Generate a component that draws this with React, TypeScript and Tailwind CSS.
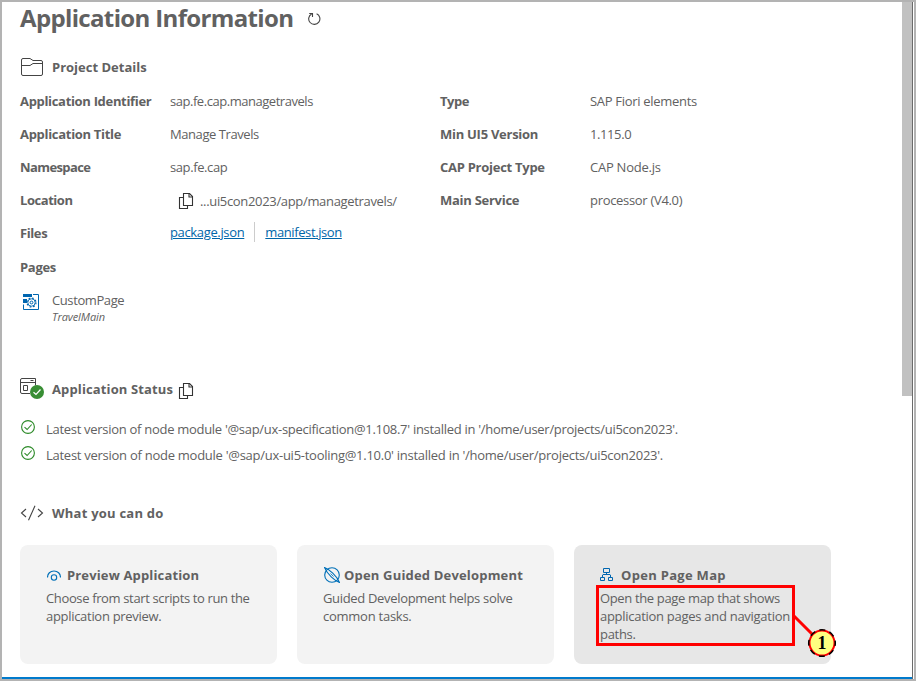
import type { ReactNode } from "react";

function CopyIcon() {
  return (
    <svg className="h-4 w-4 shrink-0" viewBox="0 0 16 16" fill="none" stroke="#333" strokeWidth="1.1">
      <path d="M5.500 .5h6l3 3v9h-9z" />
      <path d="M11 .5v3.500h3.500" />
      <path d="M5.500 4.500h-4v11h8v-3" />
    </svg>
  );
}

function CheckCircle() {
  return (
    <svg className="mr-[11px] h-[14px] w-[14px] shrink-0 -translate-y-[2px]" viewBox="0 0 14 14" fill="none" stroke="#2c8a28" strokeWidth="1.1">
      <circle cx="7" cy="7" r="6.4" />
      <path d="M3.500 7.200l2.600 2.300 4.600-5" />
    </svg>
  );
}

function Field({ label, children, track }: { label: string; children: ReactNode; track: string }) {
  return (
    <div className="flex h-[33px] items-center">
      <div className={`w-[150px] shrink-0 font-bold ${track}`}>{label}</div>
      {children}
    </div>
  );
}

function Card({ icon, title, track, children, active = false }: { icon: ReactNode; title: string; track: string; children: ReactNode; active?: boolean }) {
  return (
    <div className={`h-[119px] w-[257px] rounded-lg px-[26px] pt-[19px] ${active ? "bg-[#e7e7e7]" : "bg-[#f3f3f3]"}`}>
      <div className="flex h-[22px] items-center font-bold">
        {icon}
        <span className={`whitespace-nowrap ${track}`}>{title}</span>
      </div>
      <div className="mt-[3px] whitespace-nowrap leading-[18px]">{children}</div>
    </div>
  );
}

export default function App() {
  return (
    <div className="relative h-[681px] w-[916px] overflow-hidden border-2 border-[#b3b3b3] bg-white pl-[18px] font-['Open_Sans',sans-serif] text-[13px] leading-[18px] text-[#616161]">
      <div className="flex h-[34px] items-center text-2xl font-bold">
        <span className="-mt-[2px] tracking-[-0.65px]">Application Information</span>
        <svg className="ml-[15px] h-[14px] w-[13px]" viewBox="0 0 13 14" fill="none" stroke="#444" strokeWidth="1.1">
          <path d="M8.600 1.700a5.600 5.600 0 1 1-5 .2" />
          <path d="M1.200 1.500h3.300v3.500" />
        </svg>
      </div>
      <div className="mt-[14px] flex h-[34px] items-center font-bold">
        <svg className="mr-[8px] ml-px h-[18px] w-[23px]" viewBox="0 0 23 18" fill="none" stroke="#444">
          <path d="M.5 2Q.5 .5 2 .5h7l3 2h8q1.500 0 1.500 1.500v12q0 1.500-1.500 1.500H2Q.5 17.500 .5 16z" />
          <path d="M.5 7.500H9l3-2h9.500" />
        </svg>
        <span>Project Details</span>
      </div>
      <div className="flex">
        <div className="w-[420px]">
          <Field label="Application Identifier" track="tracking-[-0.32px]"><span className="tracking-[-0.46px]">sap.fe.cap.managetravels</span></Field>
          <Field label="Application Title" track="tracking-[-0.3px]"><span className="tracking-[-0.43px]">Manage Travels</span></Field>
          <Field label="Namespace" track="tracking-[-0.6px]"><span className="tracking-[-0.4px]">sap.fe.cap</span></Field>
          <Field label="Location" track="tracking-[-0.45px]">
            <span className="ml-2 mr-[6px] mt-[2px]"><CopyIcon /></span>
            <span className="mt-[2px] tracking-[-0.33px]">...ui5con2023/app/managetravels/</span>
          </Field>
          <Field label="Files" track="tracking-[-0.4px]">
            <span className="-mt-[2px] tracking-[-0.35px] text-[#0066a9] underline">package.json</span>
            <span className="-mt-[2px] ml-[10px] mr-[10px] h-5 w-px bg-[#ccc]" />
            <span className="-mt-[2px] tracking-[-0.4px] text-[#0066a9] underline">manifest.json</span>
          </Field>
        </div>
        <div>
          <Field label="Type" track="tracking-[-0.45px]"><span className="tracking-[-0.3px]">SAP Fiori elements</span></Field>
          <Field label="Min UI5 Version" track="tracking-[-0.27px]"><span className="tracking-[-0.4px]">1.115.0</span></Field>
          <Field label="CAP Project Type" track="tracking-[-0.27px]"><span className="tracking-[-0.25px]">CAP Node.js</span></Field>
          <Field label="Main Service" track="tracking-[-0.27px]"><span className="tracking-[-0.31px]">processor (V4.0)</span></Field>
        </div>
      </div>
      <div className="mt-px flex h-[34px] items-center font-bold tracking-[-0.3px]">Pages</div>
      <div className="mt-[7px] flex h-[34px]">
        <svg className="ml-[3px] mr-[13px] mt-[3px] h-4 w-4" viewBox="0 0 16 16" fill="none" stroke="#0066b0">
          <path d="M10 .5h5.500v15H.5V10.500" />
          <path d="M0 0h9v3H0zM0 5h4v4H0z" fill="#0066b0" stroke="none" />
          <circle cx="8.500" cy="8.500" r="4.500" strokeWidth="1.200" strokeDasharray="1.770 1.765" />
          <circle cx="8.500" cy="8.500" r="3.700" strokeWidth=".9" />
          <circle cx="8.500" cy="8.500" r="1.400" />
        </svg>
        <div>
          <div className="tracking-[-0.4px]">CustomPage</div>
          <div className="text-[11px] italic leading-[15px] tracking-[-0.1px]">TravelMain</div>
        </div>
      </div>
      <div className="mt-[47px] flex h-[34px] items-center font-bold">
        <svg className="mr-2 h-[22px] w-6" viewBox="0 0 24 22" fill="none" stroke="#444">
          <path d="M10 15.500H2Q.5 15.500 .5 14V2Q.5 .5 2 .5h13.500v7M.5 4.500h15M10.500 2.500h3M3.500 7.500h4v5h-4z" />
          <circle cx="17" cy="14" r="7" fill="#388e34" stroke="none" />
          <path d="M13.500 14.200l2.500 2.300 4.500-5" stroke="#fff" strokeWidth="1.200" />
        </svg>
        <span className="tracking-[0.13px]">Application Status</span>
        <span className="ml-[5px] mt-[3px]"><CopyIcon /></span>
      </div>
      <div className="mt-[10px] flex h-[26px] items-center pl-[1px]">
        <CheckCircle />
        <span className="tracking-[-0.29px]">Latest version of node module '@sap/ux-specification@1.108.7' installed in '/home/user/projects/ui5con2023'.</span>
      </div>
      <div className="flex h-[26px] items-center pl-[1px]">
        <CheckCircle />
        <span className="tracking-[-0.265px]">Latest version of node module '@sap/ux-ui5-tooling@1.10.0' installed in '/home/user/projects/ui5con2023'.</span>
      </div>
      <div className="mt-[28px] flex h-[34px] items-center font-bold">
        <svg className="mr-2 h-4 w-6" viewBox="0 0 24 16" fill="none" stroke="#444" strokeWidth="1.100">
          <path d="M6 4L1.500 8 6 12M18 4l4.500 4L18 12M15 .8L8.500 15.200" />
        </svg>
        <span className="tracking-[0.23px]">What you can do</span>
      </div>
      <div className="mt-[15px] flex gap-5">
        <Card
          title="Preview Application"
          track="tracking-[0.15px]"
          icon={
            <svg className="ml-[1px] mr-[6px] h-[11px] w-[14px]" viewBox="0 0 14 11" fill="none" stroke="#0070b8" strokeWidth="1.100">
              <path d="M.5 7.500C.5 3.500 3.300 1 7 1s6.500 2.500 6.500 6.500" />
              <circle cx="7" cy="7.500" r="2.700" />
            </svg>
          }
        >
          <span className="tracking-[-0.36px]">Choose from start scripts to run the</span>
          <br />
          <span className="tracking-[-0.3px]">application preview.</span>
        </Card>
        <Card
          title="Open Guided Development"
          track="tracking-[0.18px]"
          icon={
            <svg className="ml-[1px] mr-1 h-4 w-4" viewBox="0 0 16 16" fill="none" stroke="#0070b8" strokeWidth="1.100">
              <circle cx="8" cy="8" r="7.300" />
              <path d="M.5 .5C5 2 13 9 15.500 15.500C11 14 3 7 .5 .5z" />
              <path d="M6.500 6.500L9.500 9.500" strokeWidth=".8" />
            </svg>
          }
        >
          <span className="tracking-[-0.33px]">Guided Development helps solve</span>
          <br />
          <span className="tracking-[-0.25px]">common tasks.</span>
        </Card>
        <Card
          active
          title="Open Page Map"
          track="tracking-[0.3px]"
          icon={
            <svg className="mr-2 h-[13px] w-[13px] -translate-y-px" viewBox="0 0 13 13" fill="none" stroke="#0066b0">
              <path d="M3.500 .5h6v4h-6zM.5 9.500h4v3h-4zM8.500 9.500h4v3h-4zM6.500 4.500v2.500M2.500 9.500V7L3 6.500h7L10.500 7v2.500" />
            </svg>
          }
        >
          <span className="tracking-[-0.35px]">Open the page map that shows</span>
          <br />
          <span className="tracking-[-0.28px]">application pages and navigation</span>
          <br />
          <span className="tracking-[-0.3px]">paths.</span>
        </Card>
      </div>

      <div className="absolute left-[594px] top-[583px] h-[61px] w-[199px] border-[3px] border-[#ff0000]" />
      <svg className="absolute left-[790px] top-[611px] h-12 w-12" viewBox="0 0 48 48" fill="none">
        <path d="M2 3L22 23" stroke="#f00" strokeWidth="3" />
        <circle cx="30" cy="30" r="12.500" fill="#ffff80" stroke="#f00" strokeWidth="2" />
        <circle cx="30" cy="30" r="13.300" stroke="#000" strokeWidth="1.500" strokeDasharray="6 4.440" strokeDashoffset="3" />
      </svg>
      <div className="absolute left-[813px] top-[632px] w-[14px] text-center font-['Liberation_Serif',serif] text-lg font-bold leading-[18px] text-black">1</div>

      <div className="absolute right-[2px] top-0 h-[394px] w-[10px] bg-[#c1c1c1]" />
      <div className="absolute right-[1px] top-0 h-full w-px bg-[#6b6b6b]" />
      <div className="absolute bottom-0 left-0 h-[2px] w-[910px] bg-[#007acc]" />
    </div>
  );
}
